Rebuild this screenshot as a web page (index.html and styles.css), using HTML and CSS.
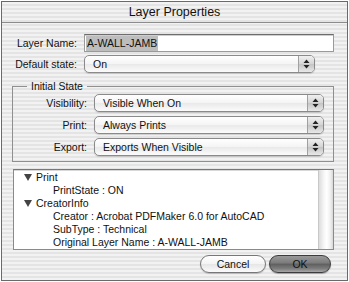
FILE: index.html
```html
<!DOCTYPE html>
<html>
<head>
<meta charset="utf-8">
<link rel="stylesheet" href="styles.css">
</head>
<body>
<div class="window">
  <div class="titlebar">Layer Properties</div>
  <div class="content">
    <div class="form">
      <label class="lbl">Layer Name:</label>
      <div class="textfield"><span class="sel">A-WALL-JAMB</span></div>
      <label class="lbl">Default state:</label>
      <div class="popup short"><span class="ptext">On</span><span class="arrows"><svg width="7" height="10" viewBox="0 0 7 10"><path d="M3.5 0.5 L6.5 4 L0.5 4 Z M3.5 9.5 L6.5 6 L0.5 6 Z" fill="#222"/></svg></span></div>
    </div>
    <fieldset class="group">
      <legend>Initial State</legend>
      <div class="gform">
        <label class="lbl">Visibility:</label>
        <div class="popup"><span class="ptext">Visible When On</span><span class="arrows"><svg width="7" height="10" viewBox="0 0 7 10"><path d="M3.5 0.5 L6.5 4 L0.5 4 Z M3.5 9.5 L6.5 6 L0.5 6 Z" fill="#222"/></svg></span></div>
        <label class="lbl">Print:</label>
        <div class="popup"><span class="ptext">Always Prints</span><span class="arrows"><svg width="7" height="10" viewBox="0 0 7 10"><path d="M3.5 0.5 L6.5 4 L0.5 4 Z M3.5 9.5 L6.5 6 L0.5 6 Z" fill="#222"/></svg></span></div>
        <label class="lbl">Export:</label>
        <div class="popup"><span class="ptext">Exports When Visible</span><span class="arrows"><svg width="7" height="10" viewBox="0 0 7 10"><path d="M3.5 0.5 L6.5 4 L0.5 4 Z M3.5 9.5 L6.5 6 L0.5 6 Z" fill="#222"/></svg></span></div>
      </div>
    </fieldset>
    <div class="list">
      <div class="rows">
        <div class="row"><span class="tri"><svg width="8" height="7" viewBox="0 0 8 7"><path d="M0 0 L8 0 L4 7 Z" fill="#444"/></svg></span>Print</div>
        <div class="row child">PrintState : ON</div>
        <div class="row"><span class="tri"><svg width="8" height="7" viewBox="0 0 8 7"><path d="M0 0 L8 0 L4 7 Z" fill="#444"/></svg></span>CreatorInfo</div>
        <div class="row child">Creator : Acrobat PDFMaker 6.0 for AutoCAD</div>
        <div class="row child">SubType : Technical</div>
        <div class="row child">Original Layer Name : A-WALL-JAMB</div>
      </div>
      <div class="scroll"></div>
    </div>
    <div class="buttons">
      <div class="btn cancel">Cancel</div>
      <div class="btn ok">OK</div>
    </div>
  </div>
</div>
</body>
</html>
```
FILE: styles.css
```css
html, body {
  margin: 0;
  padding: 0;
  background: #ffffff;
}
body {
  font-family: "Liberation Sans", Arial, sans-serif;
  font-size: 10.5px;
  color: #111;
  width: 349px;
  height: 282px;
  overflow: hidden;
}
.window {
  box-sizing: border-box;
  margin: 1px 1px 0 1px;
  height: 280px;
  border: 1px solid #6a6a6a;
  background: repeating-linear-gradient(to bottom, #f2f2f2 0px, #f2f2f2 2px, #e4e4e4 2px, #e4e4e4 4px);
  display: flex;
  flex-direction: column;
}
.titlebar {
  height: 20px;
  border-bottom: 1px solid #8c8c8c;
  text-align: center;
  font-size: 12.5px;
  line-height: 20px;
  color: #111;
}
.content {
  flex: 1;
  display: flex;
  flex-direction: column;
  padding: 11px 12px 0 10px;
}
.form {
  display: grid;
  grid-template-columns: 65px 250px;
  column-gap: 7px;
  row-gap: 3px;
  align-items: center;
}
.lbl {
  text-align: right;
  white-space: nowrap;
}
.textfield {
  box-sizing: border-box;
  height: 18px;
  background: #fff;
  border: 1px solid #9a9a9a;
  border-top-color: #6c6c6c;
  box-shadow: inset 0 1px 0 #cfcfcf;
  padding: 1px 1px;
  display: flex;
  align-items: center;
}
.sel {
  background: #bdbdbd;
  padding: 1px 1px;
  line-height: 13px;
}
.popup {
  box-sizing: border-box;
  height: 18px;
  border: 1px solid #8a8a8a;
  border-radius: 5px;
  background: linear-gradient(to bottom, #ffffff 0%, #f4f4f4 50%, #e9e9e9 51%, #fbfbfb 100%);
  display: flex;
  align-items: center;
  box-shadow: 0 1px 1px rgba(0,0,0,0.15);
}
.popup.short {
  width: 231px;
}
.ptext {
  flex: 1;
  padding-left: 8px;
}
.arrows {
  width: 15px;
  height: 100%;
  border-left: 1px solid #a0a0a0;
  border-radius: 0 4px 4px 0;
  background: linear-gradient(to bottom, #f0f0f0 0%, #d4d4d4 50%, #c4c4c4 51%, #e8e8e8 100%);
  display: flex;
  align-items: center;
  justify-content: center;
}
.group {
  margin: 7px 0 0 0;
  padding: 2px 8px 5px 10px;
  border: 1px solid #8f8f8f;
  border-radius: 0;
  min-width: 0;
  width: 322px;
  box-sizing: border-box;
}
.group legend {
  padding: 0 4px;
  margin-left: 4px;
  font-size: 10.5px;
  line-height: 12px;
}
.gform {
  display: grid;
  grid-template-columns: 64px 230px;
  column-gap: 7px;
  row-gap: 4px;
  align-items: center;
}
.list {
  margin: 7px 0 0 1px;
  width: 321px;
  height: 81px;
  box-sizing: border-box;
  border: 1px solid #8a8a8a;
  border-top-color: #777;
  background: #fff;
  display: flex;
  box-shadow: inset 0 1px 0 #d8d8d8;
}
.rows {
  flex: 1;
  padding: 1px 0 0 10px;
}
.row {
  height: 13px;
  line-height: 13px;
  display: flex;
  align-items: center;
  white-space: nowrap;
}
.tri {
  width: 12px;
  display: inline-flex;
  align-items: center;
}
.row.child {
  padding-left: 29px;
}
.scroll {
  width: 14px;
  border-left: 1px solid #c8c8c8;
  background: linear-gradient(to right, #dcdcdc 0%, #f6f6f6 35%, #ffffff 55%, #f0f0f0 80%, #d8d8d8 100%);
}
.buttons {
  display: flex;
  justify-content: flex-end;
  gap: 3px;
  margin-top: 5px;
  padding-right: 4px;
}
.btn {
  box-sizing: border-box;
  height: 18px;
  border-radius: 9px;
  text-align: center;
  line-height: 16px;
  font-size: 10.5px;
}
.cancel {
  width: 66px;
  border: 1px solid #777;
  background: linear-gradient(to bottom, #ffffff 0%, #f3f3f3 50%, #e6e6e6 51%, #fafafa 100%);
  box-shadow: 0 1px 1px rgba(0,0,0,0.2);
}
.ok {
  width: 62px;
  border: 1px solid #3c3c3c;
  background: linear-gradient(to bottom, #9a9a9a 0%, #7a7a7a 45%, #5e5e5e 50%, #7e7e7e 80%, #a8a8a8 100%);
  box-shadow: 0 1px 1px rgba(0,0,0,0.3);
  color: #111;
}
```
